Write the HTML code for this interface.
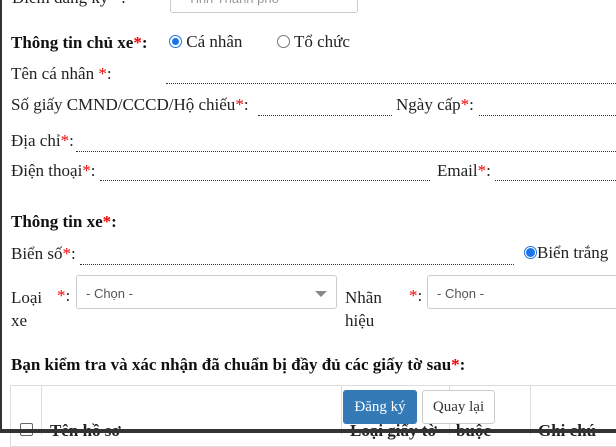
<!DOCTYPE html><html><head><meta charset="utf-8"><style>
body{margin:0;width:616px;height:433px;overflow:hidden;background:#fff;font-family:"Liberation Serif",serif;font-size:17px;color:#222;position:relative}
.a{position:absolute;white-space:nowrap;line-height:20px}
.r{color:#e00}
.dot{position:absolute;border-bottom:1px dotted #333;height:0}
.sel{position:absolute;border:1px solid #ccc;border-radius:3px;background:#fff;font-family:"Liberation Sans",sans-serif;font-size:13px;color:#555;box-sizing:border-box}
b{color:#111}
</style></head><body>
<div class="a" style="left:12px;top:-12px">Điểm đăng ký *:</div>
<div class="sel" style="left:170px;top:-10px;width:188px;height:23px"><span style="position:absolute;left:17px;top:0;color:#999">Tỉnh Thành phố</span></div>
<div class="a" style="left:11px;top:33px;font-weight:bold"><b>Thông tin chủ xe</b><span class="r">*</span><b>:</b></div>
<div class="a" style="left:169px;top:32px"><span style="display:inline-block;width:11px;height:11px;border:1px solid #1a73e8;border-radius:50%;vertical-align:-1px;position:relative"><span style="position:absolute;left:2px;top:2px;width:7px;height:7px;background:#1a73e8;border-radius:50%"></span></span> Cá nhân</div>
<div class="a" style="left:277px;top:32px"><span style="display:inline-block;width:11px;height:11px;border:1px solid #777;border-radius:50%;vertical-align:-1px"></span> Tổ chức</div>
<div class="a" style="left:11px;top:64px">Tên cá nhân <span class="r">*</span>:</div>
<div class="dot" style="left:166px;top:83px;width:450px"></div>
<div class="a" style="left:11px;top:95px">Số giấy CMND/CCCD/Hộ chiếu<span class="r">*</span>:</div>
<div class="dot" style="left:258px;top:115px;width:134px"></div>
<div class="a" style="left:396px;top:95px">Ngày cấp<span class="r">*</span>:</div>
<div class="dot" style="left:479px;top:115px;width:137px"></div>
<div class="a" style="left:11px;top:131px">Địa chỉ<span class="r">*</span>:</div>
<div class="dot" style="left:76px;top:151px;width:540px"></div>
<div class="a" style="left:11px;top:161px">Điện thoại<span class="r">*</span>:</div>
<div class="dot" style="left:100px;top:180px;width:330px"></div>
<div class="a" style="left:437px;top:161px">Email<span class="r">*</span>:</div>
<div class="dot" style="left:495px;top:180px;width:121px"></div>
<div class="a" style="left:11px;top:212px;font-weight:bold"><b>Thông tin xe</b><span class="r">*</span><b>:</b></div>
<div class="a" style="left:11px;top:244px">Biển số<span class="r">*</span>:</div>
<div class="dot" style="left:80px;top:264px;width:434px"></div>
<div class="a" style="left:524px;top:243px"><span style="display:inline-block;width:11px;height:11px;border:1px solid #1a73e8;border-radius:50%;vertical-align:-1px;position:relative"><span style="position:absolute;left:1px;top:1px;width:9px;height:9px;background:#1a73e8;border-radius:50%"></span></span>Biển trắng</div>
<div class="a" style="left:11px;top:286px;line-height:23px">Loại<br>xe</div>
<div class="a" style="left:57px;top:286px"><span class="r">*</span>:</div>
<div class="sel" style="left:76px;top:275px;width:261px;height:34px"><span style="position:absolute;left:9px;top:10px">- Chọn -</span><span style="position:absolute;left:238px;top:15px;border-left:6px solid transparent;border-right:6px solid transparent;border-top:6px solid #888"></span></div>
<div class="a" style="left:345px;top:286px;line-height:23px">Nhãn<br>hiệu</div>
<div class="a" style="left:409px;top:286px"><span class="r">*</span>:</div>
<div class="sel" style="left:427px;top:275px;width:200px;height:34px"><span style="position:absolute;left:9px;top:10px">- Chọn -</span></div>
<div class="a" style="left:11px;top:355px;font-weight:bold"><b>Bạn kiểm tra và xác nhận đã chuẩn bị đầy đủ các giấy tờ sau</b><span class="r">*</span><b>:</b></div>
<div style="position:absolute;left:10px;top:385px;width:620px;height:60px;border:1px solid #ddd"></div>
<div style="position:absolute;left:41px;top:385px;width:1px;height:50px;background:#ddd"></div>
<div style="position:absolute;left:341px;top:385px;width:1px;height:50px;background:#ddd"></div>
<div style="position:absolute;left:449px;top:385px;width:1px;height:50px;background:#ddd"></div>
<div style="position:absolute;left:530px;top:385px;width:1px;height:50px;background:#ddd"></div>
<div style="position:absolute;left:20px;top:423px;width:11px;height:11px;border:1px solid #666;border-radius:2px"></div>
<div class="a" style="left:50px;top:421px;font-weight:bold">Tên hồ sơ</div>
<div class="a" style="left:350px;top:421px;font-weight:bold">Loại giấy tờ</div>
<div class="a" style="left:456px;top:421px;font-weight:bold">buộc</div>
<div class="a" style="left:538px;top:421px;font-weight:bold">Ghi chú</div>
<div style="position:absolute;left:343px;top:390px;width:74px;height:34px;background:#337ab7;border-radius:3px;color:#fff;font-size:15px;text-align:center;line-height:34px">Đăng ký</div>
<div style="position:absolute;left:422px;top:390px;width:73px;height:34px;background:#fff;border:1px solid #ccc;box-sizing:border-box;border-radius:3px;color:#333;font-size:15px;text-align:center;line-height:32px">Quay lại</div>
<div style="position:absolute;left:0;top:0;width:2px;height:433px;background:#333"></div>
<div style="position:absolute;left:0;top:429px;width:616px;height:4px;background:#333"></div>
</body></html>
